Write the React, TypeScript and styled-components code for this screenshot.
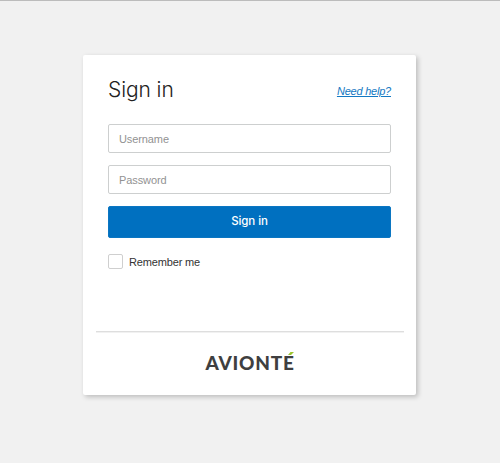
import React from "react";
import styled, { createGlobalStyle } from "styled-components";

const GlobalStyle = createGlobalStyle`
  *, *::before, *::after { box-sizing: border-box; }
  body { margin: 0; background: #f1f1f1; font-family: "Liberation Sans", Arial, sans-serif; }
`;

const Page = styled.main`
  height: 463px;
  border-top: 1px solid #bcbcbc;
  background: #f1f1f1;
  padding-top: 54px;
  overflow: hidden;
`;

const Card = styled.section`
  width: 333px;
  height: 340px;
  margin-left: 83px;
  display: flex;
  flex-direction: column;
  background: #fff;
  border-radius: 2px;
  box-shadow: 2px 2px 5px rgba(0, 0, 0, 0.22);
`;

const Form = styled.form`
  height: 276px;
  padding: 0 25px;
  display: flex;
  flex-direction: column;
`;

const Header = styled.header`
  height: 69px;
  display: flex;
  justify-content: space-between;
`;

const Title = styled.h1`
  margin: 22px 0 0;
  font: 300 21px/26px Inter, sans-serif;
  letter-spacing: -0.1px;
  color: #222;
  white-space: nowrap;
`;

const HelpLink = styled.a`
  margin-top: 28px;
  font-size: 11px;
  line-height: 16px;
  letter-spacing: -0.22px;
  font-style: italic;
  color: #1478c2;
  text-decoration: underline;
`;

const Field = styled.input`
  display: block;
  width: 283px;
  height: 29px;
  margin: 0 0 12px;
  padding: 1px 10px 0;
  border: 1px solid #cdcfcf;
  border-radius: 2px;
  background: #fff;
  font: 11px "Liberation Sans", Arial, sans-serif;
  letter-spacing: -0.1px;
  outline: none;

  &::placeholder { color: #929292; opacity: 1; }
`;

const SubmitButton = styled.button`
  height: 32px;
  padding: 0 0 2px;
  border: 1px solid #0b76c2;
  border-radius: 2px;
  background: #0070c0;
  color: #fff;
  font: 500 11.5px Inter, sans-serif;
  letter-spacing: -0.1px;
`;

const Remember = styled.label`
  display: flex;
  align-items: center;
  gap: 6px;
  margin-top: 16px;
  height: 15px;
  font-size: 11px;
  letter-spacing: -0.15px;
  color: #333;
`;

const Checkbox = styled.input`
  appearance: none;
  width: 15px;
  height: 15px;
  margin: 0;
  border: 1px solid #cfcfcf;
  border-radius: 2px;
  background: #fff;
`;

const Footer = styled.footer`
  margin: 0 12px 0 13px;
  border-top: 1px solid #dedede;
  box-shadow: inset 0 1px #f1f1f1;
  display: flex;
  justify-content: center;
`;

const Brand = styled.div`
  position: relative;
  width: 89px;
  margin-top: 19px;
  font: 900 19px/24px Lato, sans-serif;
  letter-spacing: 0.75px;
  color: #3f3f40;
  white-space: nowrap;
`;

const Accent = styled.svg`
  position: absolute;
  top: 1px;
  right: 1px;
`;

export default function App() {
  return (
    <>
      <GlobalStyle />
      <Page>
        <Card>
          <Form onSubmit={(e) => e.preventDefault()}>
            <Header>
              <Title>Sign in</Title>
              <HelpLink href="#">Need help?</HelpLink>
            </Header>
            <Field type="text" placeholder="Username" />
            <Field type="password" placeholder="Password" />
            <SubmitButton type="submit">Sign in</SubmitButton>
            <Remember>
              <Checkbox type="checkbox" />
              Remember me
            </Remember>
          </Form>
          <Footer>
            <Brand>
              AVIONTE
              <Accent width="6" height="4" viewBox="0 0 6 4">
                <path d="M2.5 0H6L3 3H0Z" fill="#9bc52f" />
              </Accent>
            </Brand>
          </Footer>
        </Card>
      </Page>
    </>
  );
}
